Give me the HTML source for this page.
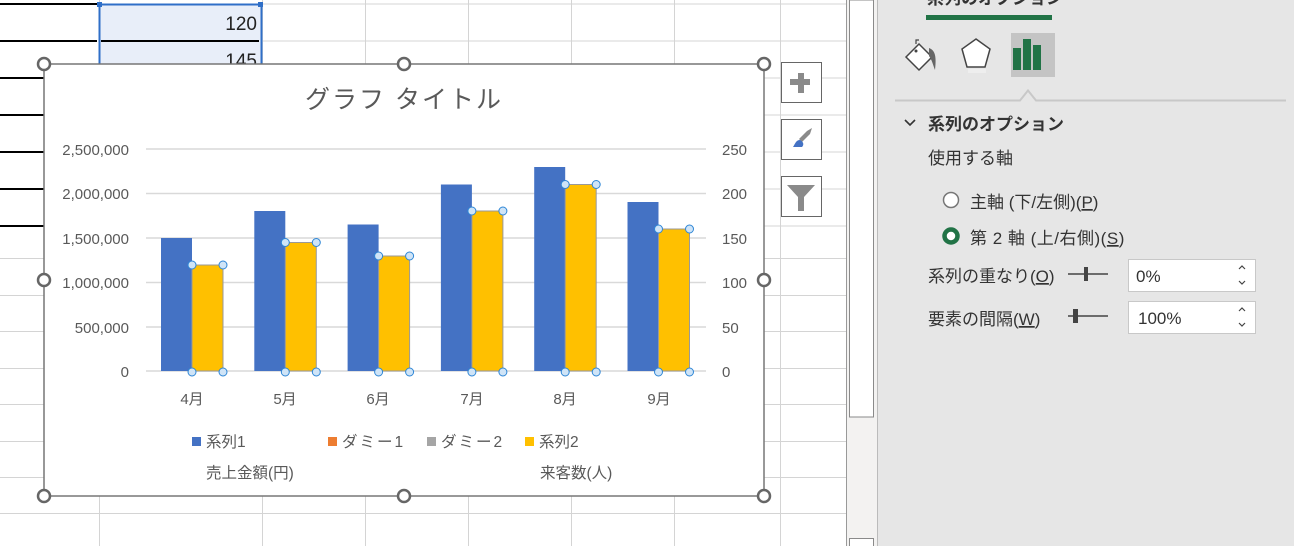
<!DOCTYPE html>
<html><head><meta charset="utf-8"><style>
body{margin:0;width:1294px;height:546px;overflow:hidden;background:#fff;font-family:"Liberation Sans","Noto Sans CJK JP",sans-serif}
svg text{font-family:"Liberation Sans","Noto Sans CJK JP",sans-serif}
</style></head><body>
<svg width="1294" height="546" viewBox="0 0 1294 546" xmlns="http://www.w3.org/2000/svg">
<g stroke="#d4d4d4" stroke-width="1">
<line x1="0" y1="258.5" x2="846" y2="258.5"/><line x1="0" y1="295.5" x2="846" y2="295.5"/><line x1="0" y1="331.5" x2="846" y2="331.5"/><line x1="0" y1="368.5" x2="846" y2="368.5"/><line x1="0" y1="404.5" x2="846" y2="404.5"/><line x1="0" y1="441.5" x2="846" y2="441.5"/><line x1="0" y1="477.5" x2="846" y2="477.5"/><line x1="0" y1="513.5" x2="846" y2="513.5"/>
<line x1="262" y1="4" x2="846" y2="4"/><line x1="262" y1="41" x2="846" y2="41"/><line x1="262" y1="78" x2="846" y2="78"/><line x1="262" y1="115" x2="846" y2="115"/><line x1="262" y1="152" x2="846" y2="152"/><line x1="262" y1="189" x2="846" y2="189"/><line x1="262" y1="226" x2="846" y2="226"/>
<line x1="99.5" y1="0" x2="99.5" y2="546"/><line x1="262.5" y1="0" x2="262.5" y2="546"/><line x1="365.5" y1="0" x2="365.5" y2="546"/><line x1="468.5" y1="0" x2="468.5" y2="546"/><line x1="571.5" y1="0" x2="571.5" y2="546"/><line x1="674.5" y1="0" x2="674.5" y2="546"/><line x1="780.5" y1="0" x2="780.5" y2="546"/>
</g>
<g stroke="#000" stroke-width="2">
<line x1="0" y1="4" x2="97" y2="4"/><line x1="0" y1="41" x2="97" y2="41"/><line x1="0" y1="78" x2="97" y2="78"/><line x1="0" y1="115" x2="97" y2="115"/><line x1="0" y1="152" x2="97" y2="152"/><line x1="0" y1="189" x2="97" y2="189"/><line x1="0" y1="226" x2="97" y2="226"/>
</g>
<rect x="99" y="4" width="163" height="60" fill="#e8eef9"/>
<line x1="101" y1="41" x2="259" y2="41" stroke="#000" stroke-width="2"/>
<rect x="99.5" y="4.5" width="162" height="70" fill="none" stroke="#2f6fc8" stroke-width="2"/>
<rect x="97" y="2" width="5" height="5" fill="#2f6fc8"/><rect x="258" y="2" width="5" height="5" fill="#2f6fc8"/>
<text x="257" y="30" font-size="19" text-anchor="end" fill="#222">120</text>
<text x="257" y="67" font-size="19" text-anchor="end" fill="#222">145</text>
<rect x="44" y="64" width="720" height="432" fill="#fff" stroke="#777" stroke-width="1.5"/>
<text x="404" y="108" font-size="25" text-anchor="middle" fill="#595959" letter-spacing="2">グラフ タイトル</text>
<g stroke="#d9d9d9" stroke-width="1.5">
<line x1="146" y1="149" x2="706" y2="149"/><line x1="146" y1="193.5" x2="706" y2="193.5"/><line x1="146" y1="238" x2="706" y2="238"/><line x1="146" y1="282.5" x2="706" y2="282.5"/><line x1="146" y1="327" x2="706" y2="327"/><line x1="146" y1="371" x2="706" y2="371"/>
</g>
<g font-size="15" fill="#595959" text-anchor="end">
<text x="129" y="155">2,500,000</text><text x="129" y="199">2,000,000</text><text x="129" y="244">1,500,000</text><text x="129" y="288">1,000,000</text><text x="129" y="333">500,000</text><text x="129" y="377">0</text>
</g>
<g font-size="15" fill="#595959" text-anchor="start">
<text x="722" y="155">250</text><text x="722" y="199">200</text><text x="722" y="244">150</text><text x="722" y="288">100</text><text x="722" y="333">50</text><text x="722" y="377">0</text>
</g>
<g fill="#4472c4">
<rect x="161" y="238" width="31" height="133"/><rect x="254.3" y="211" width="31" height="160"/><rect x="347.6" y="224.5" width="31" height="146.5"/><rect x="440.9" y="184.5" width="31" height="186.5"/><rect x="534.2" y="167" width="31" height="204"/><rect x="627.5" y="202" width="31" height="169"/>
</g>
<g fill="#ffc000" stroke="#999" stroke-width="1">
<rect x="192" y="265" width="31" height="106"/><rect x="285.3" y="242.5" width="31" height="128.5"/><rect x="378.6" y="256" width="31" height="115"/><rect x="471.9" y="211" width="31" height="160"/><rect x="565.2" y="184.5" width="31" height="186.5"/><rect x="658.5" y="229" width="31" height="142"/>
</g>
<g fill="#cfe4f7" stroke="#2e86d6" stroke-width="1">
<circle cx="192" cy="265" r="4"/><circle cx="223" cy="265" r="4"/><circle cx="192" cy="372" r="4"/><circle cx="223" cy="372" r="4"/>
<circle cx="285.3" cy="242.5" r="4"/><circle cx="316.3" cy="242.5" r="4"/><circle cx="285.3" cy="372" r="4"/><circle cx="316.3" cy="372" r="4"/>
<circle cx="378.6" cy="256" r="4"/><circle cx="409.6" cy="256" r="4"/><circle cx="378.6" cy="372" r="4"/><circle cx="409.6" cy="372" r="4"/>
<circle cx="471.9" cy="211" r="4"/><circle cx="502.9" cy="211" r="4"/><circle cx="471.9" cy="372" r="4"/><circle cx="502.9" cy="372" r="4"/>
<circle cx="565.2" cy="184.5" r="4"/><circle cx="596.2" cy="184.5" r="4"/><circle cx="565.2" cy="372" r="4"/><circle cx="596.2" cy="372" r="4"/>
<circle cx="658.5" cy="229" r="4"/><circle cx="689.5" cy="229" r="4"/><circle cx="658.5" cy="372" r="4"/><circle cx="689.5" cy="372" r="4"/>
</g>
<g font-size="15" fill="#595959" text-anchor="middle">
<text x="192" y="404">4月</text><text x="285" y="404">5月</text><text x="378" y="404">6月</text><text x="472" y="404">7月</text><text x="565" y="404">8月</text><text x="659" y="404">9月</text>
</g>
<g font-size="15.5" fill="#595959">
<rect x="192" y="437" width="9" height="9" fill="#4472c4"/><text x="206" y="447">系列1</text>
<rect x="328" y="437" width="9" height="9" fill="#ed7d31"/><text x="342" y="447" letter-spacing="2">ダミー1</text>
<rect x="427" y="437" width="9" height="9" fill="#a5a5a5"/><text x="441" y="447" letter-spacing="2">ダミー2</text>
<rect x="525" y="437" width="9" height="9" fill="#ffc000"/><text x="539" y="447">系列2</text>
<text x="206" y="478">売上金額(円)</text><text x="540" y="478">来客数(人)</text>
</g>
<g fill="#fff" stroke="#666" stroke-width="2.5">
<circle cx="44" cy="64" r="6"/><circle cx="404" cy="64" r="6"/><circle cx="764" cy="64" r="6"/>
<circle cx="44" cy="280" r="6"/><circle cx="764" cy="280" r="6"/>
<circle cx="44" cy="496" r="6"/><circle cx="404" cy="496" r="6"/><circle cx="764" cy="496" r="6"/>
</g>
<g fill="#fff" stroke="#666" stroke-width="1">
<rect x="781.5" y="62.5" width="40" height="40"/><rect x="781.5" y="119.5" width="40" height="40"/><rect x="781.5" y="176.5" width="40" height="40"/>
</g>
<path d="M798 73h6v6h6v6h-6v8h-6v-8h-8v-6h8z" fill="#8a8a8a"/>
<path d="M812 128l-2 6-8 8-3-3 8-8z" fill="#8a8a8a"/>
<path d="M800 140c-4 0-5 4-7 7h9c2-2 2-5-2-7z" fill="#4472c4"/>
<path d="M787 185h28l-11 12v14h-6v-14z" fill="#8a8a8a"/>
<rect x="846" y="0" width="31" height="546" fill="#f3f2f1"/>
<line x1="846.5" y1="0" x2="846.5" y2="546" stroke="#999"/>
<rect x="849.5" y="0" width="24" height="417" fill="#fff" stroke="#8a8a8a"/>
<rect x="849.5" y="538.5" width="24" height="10" fill="#fff" stroke="#8a8a8a"/>
<line x1="877.5" y1="0" x2="877.5" y2="546" stroke="#bbb"/>
<rect x="878" y="0" width="416" height="546" fill="#e6e6e6"/>
<rect x="926" y="15" width="126" height="5" fill="#217346"/>
<text x="927" y="4" font-size="17" font-weight="bold" fill="#333">系列のオプション</text>
<path d="M906 57l13-13 13 13-13 13z" fill="#fff" stroke="#444" stroke-width="1.5"/>
<path d="M916 44v-4h3" fill="none" stroke="#444" stroke-width="1.2"/>
<circle cx="916" cy="51" r="1.5" fill="#444"/>
<path d="M929 48c5 2 8 6 6 22-2-5-3-10-6-14z" fill="#666"/>
<path d="M976 39l14 10-5 18h-18l-5-18z" fill="#fff" stroke="#444" stroke-width="1.5"/>
<rect x="968" y="69" width="18" height="4" fill="#eee"/>
<rect x="1011" y="33" width="44" height="44" fill="#c4c4c4"/>
<rect x="1013" y="48" width="8" height="22" fill="#217346"/><rect x="1023" y="39" width="8" height="31" fill="#217346"/><rect x="1033" y="45" width="8" height="25" fill="#217346"/>
<path d="M895 100.5h125l8-10 8 10h250" fill="none" stroke="#c8c8c8" stroke-width="2"/>
<path d="M905 120l5 5 5-5" fill="none" stroke="#333" stroke-width="1.6"/>
<text x="928" y="130" font-size="17" font-weight="bold" fill="#333">系列のオプション</text>
<text x="928" y="164" font-size="17" fill="#333">使用する軸</text>
<circle cx="951" cy="200" r="7.5" fill="#fff" stroke="#777" stroke-width="1.5"/>
<text x="970" y="208" font-size="17" fill="#333">主軸 (下/左側)(<tspan text-decoration="underline">P</tspan>)</text>
<circle cx="951" cy="236" r="6.5" fill="#fff" stroke="#217346" stroke-width="4.5"/>
<text x="970" y="244" font-size="17" fill="#333" letter-spacing="0.5">第 2 軸 (上/右側)(<tspan text-decoration="underline">S</tspan>)</text>
<text x="928" y="282" font-size="17" fill="#333">系列の重なり(<tspan text-decoration="underline">O</tspan>)</text>
<line x1="1068" y1="274" x2="1108" y2="274" stroke="#444" stroke-width="1.5"/><rect x="1084" y="267" width="4" height="14" fill="#444"/>
<rect x="1128.5" y="259.5" width="127" height="32" fill="#fff" stroke="#c8c8c8"/>
<text x="1136" y="282" font-size="17" fill="#333">0%</text>
<path d="M1239 269l3-3 3 3M1239 281l3 3 3-3" fill="none" stroke="#444" stroke-width="1.2"/>
<text x="928" y="325" font-size="17" fill="#333">要素の間隔(<tspan text-decoration="underline">W</tspan>)</text>
<line x1="1068" y1="316" x2="1108" y2="316" stroke="#444" stroke-width="1.5"/><rect x="1073" y="309" width="5" height="14" fill="#444"/>
<rect x="1128.5" y="301.5" width="127" height="32" fill="#fff" stroke="#c8c8c8"/>
<text x="1138" y="324" font-size="17" fill="#333">100%</text>
<path d="M1239 311l3-3 3 3M1239 323l3 3 3-3" fill="none" stroke="#444" stroke-width="1.2"/>
</svg>
</body></html>
